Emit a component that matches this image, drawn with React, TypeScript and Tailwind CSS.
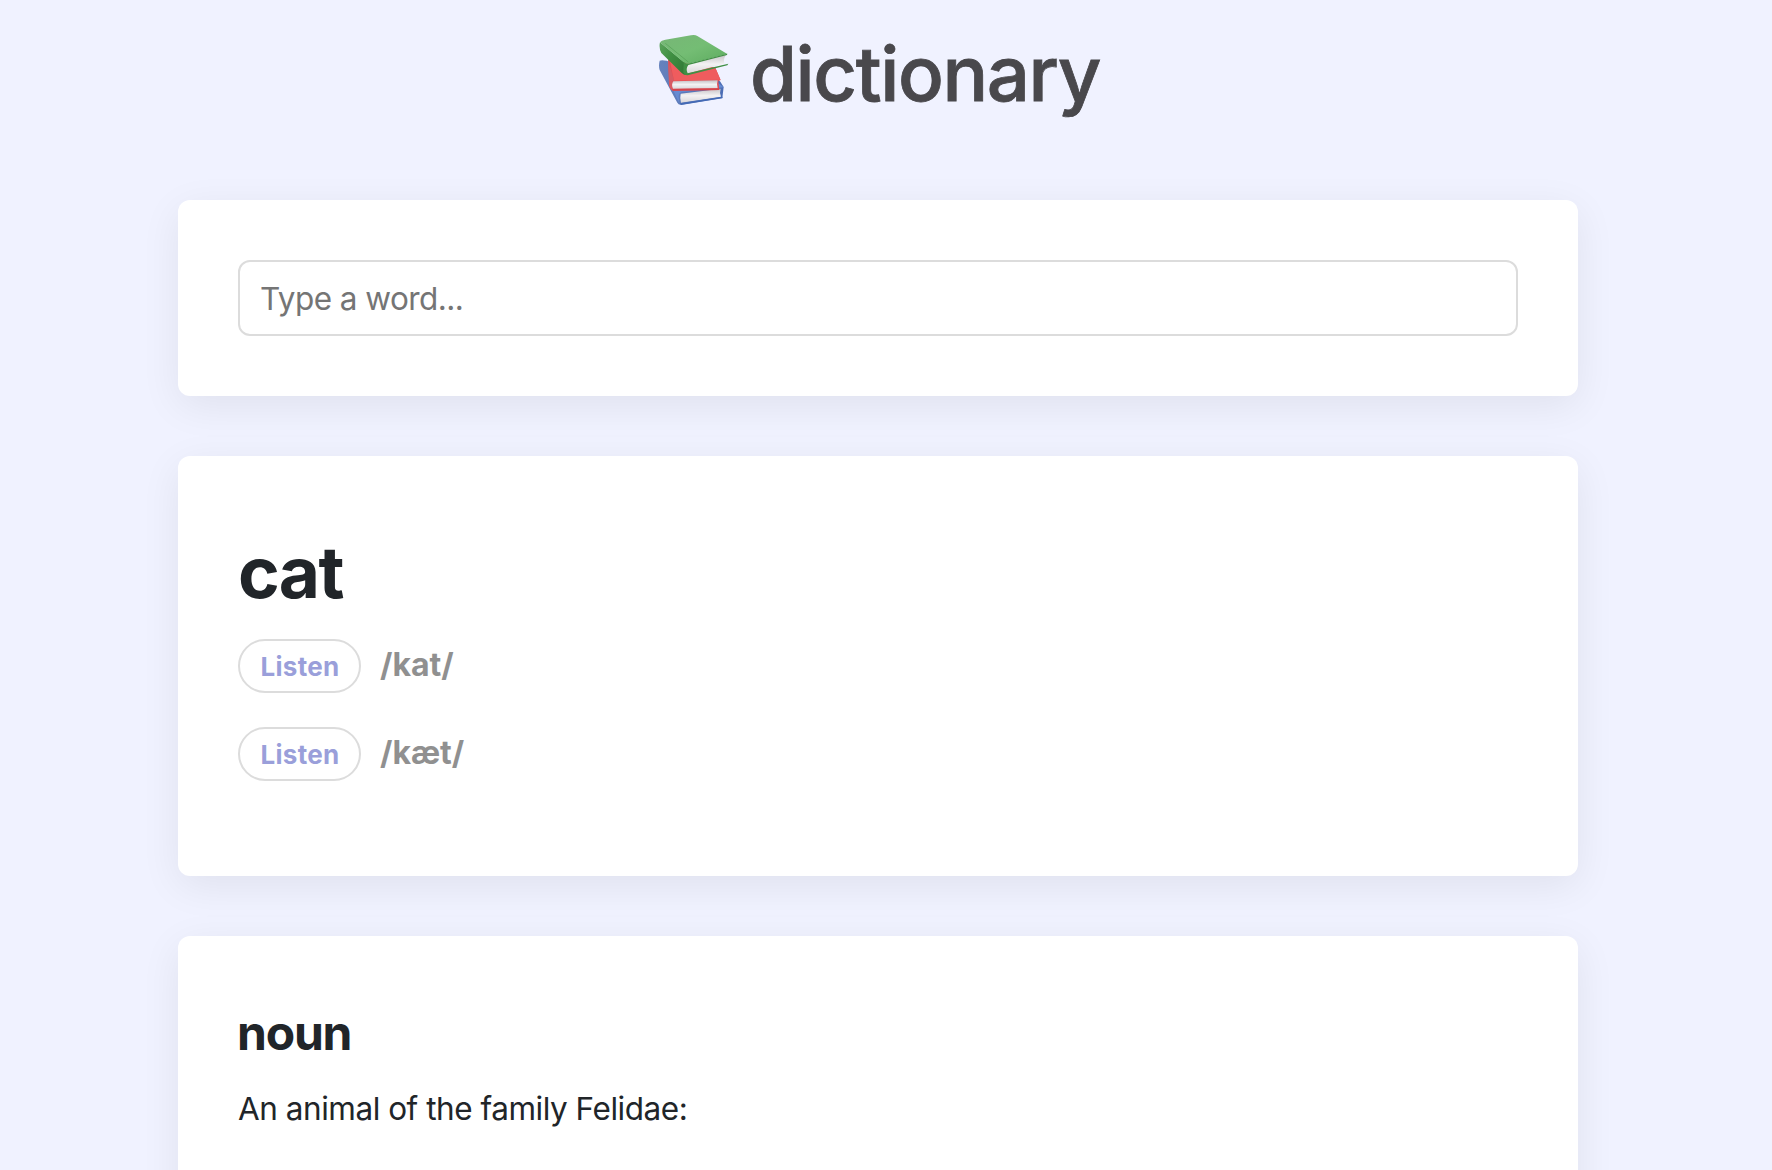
import React from "react";

const card =
  "w-[1400px] rounded-xl bg-white px-[60px] shadow-[0_10px_40px_rgba(0,0,0,0.07)]";

function Books() {
  return (
    <svg viewBox="57 42 210 216" className="h-[72px] w-[70px] shrink-0" aria-hidden="true">
      <defs>
        <linearGradient id="cover" x1="0" y1="0" x2="1" y2="1">
          <stop offset="0" stopColor="#77b676" />
          <stop offset="0.5" stopColor="#74bd74" />
          <stop offset="1" stopColor="#5cab5e" />
        </linearGradient>
        <linearGradient id="spine" x1="0" y1="0" x2="1" y2="0.6">
          <stop offset="0" stopColor="#5ba35b" />
          <stop offset="0.5" stopColor="#3f8f42" />
          <stop offset="1" stopColor="#347c38" />
        </linearGradient>
        <linearGradient id="pages" x1="0" y1="0" x2="0" y2="1">
          <stop offset="0" stopColor="#c4c2c6" />
          <stop offset="0.5" stopColor="#f3f2f3" />
          <stop offset="1" stopColor="#d9d7da" />
        </linearGradient>
        <linearGradient id="blue" x1="0" y1="0" x2="1" y2="0">
          <stop offset="0" stopColor="#6682bd" />
          <stop offset="1" stopColor="#4b6db5" />
        </linearGradient>
      </defs>
      <path d="M59 122 Q64 119 80 122 L240 184 L251 201 L247 234 L124 254 Q116 256 112 248 L59 150 Q55 137 59 122Z" fill="url(#blue)" />
      <path d="M98 208 L236 190 L251 202 L124 217 Q116 220 116 230 L118 250Z" fill="#668bd2" />
      <path d="M122 221 L242 206 Q238 218 243 230 L123 248 Q119 234 122 221Z" fill="url(#pages)" />
      <path d="M119 250 L248 230 L247 235 L123 255Z" fill="#446ab5" />
      <path d="M84 118 L226 143 L242 180 L235 184 L238 210 L98 212 Q89 207 88 194Z" fill="#e34c52" />
      <path d="M89 119 L226 143 L241 179 L102 182Z" fill="#ef5c5e" />
      <path d="M84 117 L102 181 Q93 193 98 211 Q88 207 87 193Z" fill="#d75a62" />
      <path d="M100 184 L233 181 Q229 194 233 205 L99 206 Q93 195 100 184Z" fill="url(#pages)" />
      <path d="M97 207 L237 205 L238 210 L99 212Z" fill="#d5444b" />
      <path d="M60 67 L136 130 Q132 149 139 165 Q132 166 125 159 L64 99 Q56 84 60 67Z" fill="url(#spine)" />
      <path d="M60 67 Q64 61 76 59 L153 46 Q164 43 172 48 L262 102 L143 132 Q137 132 130 126Z" fill="url(#cover)" />
      <path d="M76 70 L145 126" stroke="#559f56" strokeWidth="2" fill="none" />
      <path d="M143 132 L258 104 Q249 117 253 131 L141 161 Q134 146 143 132Z" fill="url(#pages)" />
      <path d="M131 126 Q137 132 143 131 L262 101 L261 105 L145 135 Q136 147 143 160 L265 131 L262 136 L143 166 Q134 166 130 158Z" fill="#408f44" />
    </svg>
  );
}

function Pronunciation({ text }: { text: string }) {
  return (
    <div className="flex h-[54px] items-center">
      <button className="flex h-[54px] w-[123px] items-center justify-center rounded-full border-2 border-[#dcdcdc] pt-px pl-px text-[26px] leading-[50px] font-bold tracking-[0.3px] text-[#9a9fda]">
        Listen
      </button>
      <span className="-mt-[3px] ml-[19px] text-[32px] leading-[46px] font-bold text-[#909090]">{text}</span>
    </div>
  );
}

export default function App() {
  return (
    <main className="flex h-[1170px] w-[1772px] flex-col items-start overflow-hidden bg-[#f0f2ff] pl-[178px] font-[Inter,sans-serif] text-[#212529]">
      <header className="flex h-[200px] w-[1400px] shrink-0 items-start pt-[28px] pl-[481px]">
        <div className="pt-[6px]">
          <Books />
        </div>
        <h1 className="ml-[21px] text-[76px] leading-[90px] font-medium tracking-[-1.4px] text-[#49484c] [-webkit-text-stroke:0.8px_#49484c]">
          dictionary
        </h1>
      </header>

      <section className={`${card} h-[196px] shrink-0 py-[60px]`}>
        <input
          type="search"
          placeholder="Type a word..."
          className="block h-[76px] w-full appearance-none rounded-xl border-2 border-[#dcdcdc] px-5 text-[31.5px] tracking-[-0.55px] outline-none placeholder:text-[#757575]"
        />
      </section>

      <section className={`${card} mt-[60px] h-[420px] shrink-0 pt-[74px]`}>
        <h2 className="text-[71px] leading-[84px] font-bold tracking-[-1.6px]">cat</h2>
        <div className="mt-[25px] flex flex-col gap-[34px]">
          <Pronunciation text="/kat/" />
          <Pronunciation text="/kæt/" />
        </div>
      </section>

      <section className={`${card} mt-[60px] h-[420px] shrink-0 pt-[68px]`}>
        <h3 className="-ml-px text-[48px] leading-[58px] font-bold tracking-[-1.2px]">noun</h3>
        <p className="mt-[23px] text-[31.5px] leading-[48px] tracking-[-0.47px]">An animal of the family Felidae:</p>
      </section>
    </main>
  );
}
